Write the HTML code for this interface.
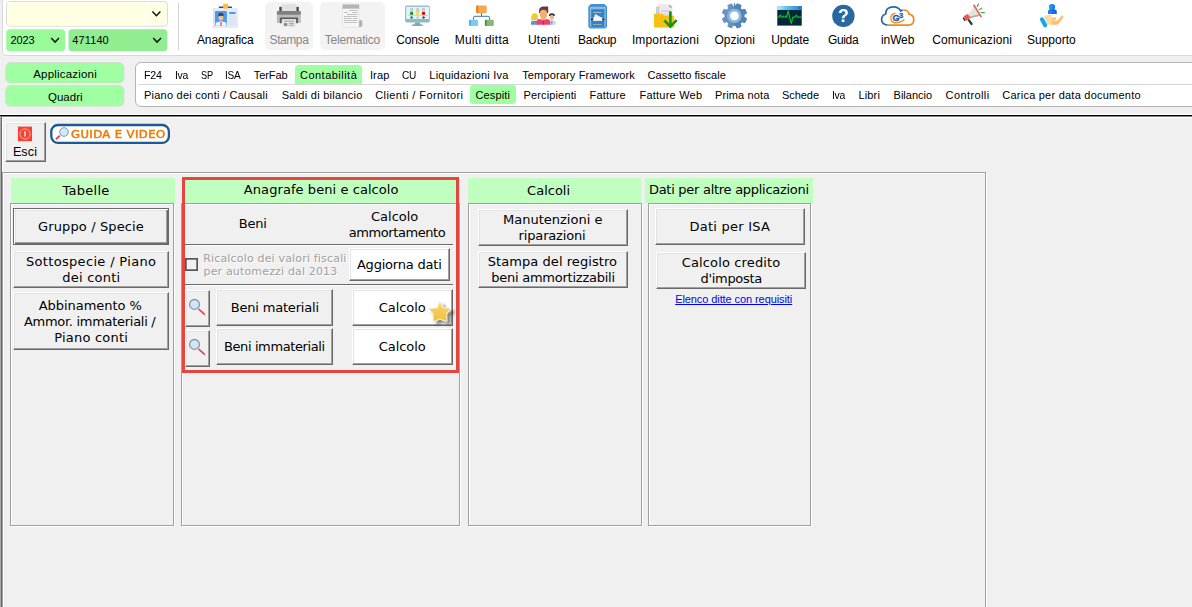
<!DOCTYPE html>
<html><head><meta charset="utf-8"><title>Cespiti</title>
<style>
*{box-sizing:border-box;margin:0;padding:0}
html,body{width:1192px;height:607px;overflow:hidden;background:#f0f0f0}
body{position:relative;font-family:"Liberation Sans",sans-serif;color:#000}
.abs{position:absolute}
#top{position:absolute;left:2px;top:-4px;width:1200px;height:60px;background:#fff;border:1px solid #d9d9d9;border-radius:5px}
.cb{position:absolute;border:1px solid #dcdcdc;border-radius:4px;font-size:11px;line-height:22px;padding-left:5px;white-space:nowrap}
.cb.g{border-color:rgba(255,255,255,.12);line-height:20px;letter-spacing:-0.35px;padding-left:4px}
.chev{position:absolute;width:9px;height:6px}
.tb{position:absolute;top:0;height:50px;font-size:12px;text-align:center;white-space:nowrap}
.tb span{position:absolute;left:0;right:0;top:33px;line-height:15px}
.tb svg{position:absolute;top:4px;left:50%;margin-left:-12px;width:24px;height:24px}
.dis{background:#f3f3f3;border-radius:5px}
.gbtn{position:absolute;left:6px;width:118px;height:21px;background:#a0ffa0;border-radius:5px;font-size:12px;line-height:22px;text-align:center;box-shadow:0 0 1px #d8c0d8}
#menu{position:absolute;left:135px;top:62px;width:1070px;height:45px;background:#fff;border:1px solid #b4b4b4;border-radius:6px}
.mi{position:absolute;font-size:11.5px;line-height:16px;white-space:nowrap}
.hl{position:absolute;background:#a0ffa0}
.v{font-family:"DejaVu Sans","Liberation Sans",sans-serif}
.hdr{position:absolute;top:178px;height:25px;background:#c0ffc0}
.ht{position:absolute;top:179px;font-family:"DejaVu Sans","Liberation Sans",sans-serif;font-size:13px;line-height:24px;white-space:nowrap}
.box{position:absolute;top:203px;height:323px;border:1px solid #a0a0a0;box-shadow:inset 1px 1px 0 #fff,1px 1px 0 #fff}
.btn{position:absolute;background:#f0f0f0;font-family:"DejaVu Sans","Liberation Sans",sans-serif;font-size:13px;line-height:16px;text-align:center;display:flex;align-items:center;justify-content:center;
 border-top:1px solid #fff;border-left:1px solid #fff;border-right:1px solid #696969;border-bottom:1px solid #696969;box-shadow:inset -1px -1px 0 #a0a0a0,inset 1px 1px 0 #e3e3e3}
.btn.w{background:#fff}
.btn.def{border:1px solid #696969;box-shadow:inset 1px 1px 0 #fff,inset -1px -1px 0 #696969,inset -2px -2px 0 #a0a0a0,inset 2px 2px 0 #e3e3e3}
</style></head><body>
<div id="top"></div>
<!-- combos -->
<svg class="abs" style="left:0;top:0;width:180px;height:56px" viewBox="0 0 180 56">
<rect x="6.5" y="1.5" width="161" height="24.7" rx="3.6" fill="#fff" stroke="#dadada" stroke-width="1"/>
<path d="M10 2H146V25.7H10Q7 25.7 7 22.7V5Q7 2 10 2Z" fill="#ffffe1"/>
<path d="M147 2.8H164.3Q166.4 2.8 166.4 4.8V22.6Q166.4 24.6 164.3 24.6H147Z" fill="#ffffe1"/>
<rect x="6.2" y="29.2" width="58.9" height="22.1" rx="3.6" fill="#98fb98"/>
<rect x="68.5" y="29.3" width="98.8" height="21.9" rx="3.6" fill="#90ee90"/>
<path d="M152.4 11.6L156.4 15.7L160.4 11.6" fill="none" stroke="#111" stroke-width="1.5"/>
<path d="M51.2 38L55.1 42.1L59 38" fill="none" stroke="#111" stroke-width="1.5"/>
<path d="M153.2 38L157.1 42.1L161 38" fill="none" stroke="#111" stroke-width="1.5"/>
</svg>
<div class="abs" style="left:178px;top:3px;width:1px;height:47px;background:#d4d4d4"></div>

<!-- toolbar icons -->
<svg class="abs" style="left:0;top:0;width:1192px;height:56px;z-index:2" viewBox="0 0 1192 56">
<!-- Anagrafica -->
<g>
<rect x="213.2" y="7.9" width="24.8" height="20.1" rx="0.8" fill="#e4ebf8"/>
<rect x="213.2" y="7.9" width="1.2" height="20.1" fill="#d3dcee"/>
<rect x="218.7" y="6.5" width="13.4" height="1.5" rx="0.7" fill="#3d4a5c"/>
<rect x="223.2" y="3.7" width="4.8" height="5" rx="0.8" fill="#f7c13c"/>
<rect x="215" y="11" width="11.9" height="14.8" rx="0.8" fill="#4a9af5"/>
<path d="M215.6 25.8 V23.6 Q215.6 22.4 218.5 21.8 L221 21.2 L223.5 21.8 Q226.4 22.4 226.4 23.6 V25.8Z" fill="#f4f6fb"/>
<rect x="220.3" y="22" width="1.4" height="3.8" fill="#e2555a"/>
<ellipse cx="220.9" cy="17.6" rx="2.5" ry="3" fill="#f6c08a"/>
<path d="M218.2 16.6 Q217.8 13 221 12.8 Q224 13 223.6 16.6 Q221.5 14.8 218.2 16.6Z" fill="#394452"/>
<rect x="229" y="12.1" width="6.8" height="1.9" rx="0.9" fill="#4a9af5"/>
<path d="M229 16.2H235.8M229 18.2H235.8M229 20.2H235.8M229 22.2H235.8M229 24.2H235.8" stroke="#d6dcea" stroke-width="0.8"/>
</g>
<!-- Stampa -->
<g>
<rect x="281.9" y="4.2" width="14.2" height="7" fill="#e0e0e0"/>
<rect x="279.3" y="6.8" width="2.4" height="4.5" fill="#4a4a4a"/>
<rect x="296.4" y="6.8" width="2.4" height="4.5" fill="#4a4a4a"/>
<rect x="276.9" y="11" width="23.9" height="12" rx="0.8" fill="#bdbdbd"/>
<rect x="276.9" y="11" width="23.9" height="3.7" rx="0.8" fill="#808080"/>
<path d="M279.8 23.2V17.4H298V23.2H296.2V19.2H281.6V23.2Z" fill="#5a5a5a"/>
<rect x="282.2" y="19.2" width="13.6" height="8.2" fill="#e6e6e6"/>
<rect x="284" y="23.2" width="3.2" height="2.6" fill="#808080"/>
<path d="M284 21.2H294M289 23.4H294M289 25.2H294" stroke="#9a9a9a" stroke-width="0.9"/>
</g>
<!-- Telematico -->
<g>
<path d="M342.5 4.5H359.1V27.4H344Q342.5 27.4 342.5 25.8Z" fill="#f6f6f6" stroke="#dcdcdc" stroke-width="0.6"/>
<rect x="342.5" y="4.5" width="16.6" height="4.2" fill="#b4b4b4"/>
<path d="M359.1 20.3H362.3V25Q362.3 27.2 360 27.2H359.1Z" fill="#b0b0b0"/>
<path d="M349 10.5H357.5M344 12.5H348M352 12.5H357.5M347 14.5H357.5M344 16.5H357.5M344 18.5H351.5M353 18.5H357.5M344 20.5H357.5M344 22.5H357.5" stroke="#bcbcbc" stroke-width="0.9"/>
</g>
<!-- Console -->
<g>
<rect x="405.1" y="5.5" width="24.7" height="16.9" rx="1.6" fill="#8fb8c8"/>
<rect x="406.2" y="6.8" width="22.8" height="12.2" fill="#e0f4fc"/>
<rect x="410.1" y="7.9" width="3" height="4.2" fill="#d0c8c8"/><rect x="416.2" y="7.9" width="3" height="4.2" fill="#d0c8c8"/><rect x="422" y="7.9" width="3" height="4.2" fill="#d0c8c8"/>
<rect x="410.1" y="12.1" width="3" height="2.7" fill="#109010"/><rect x="416.2" y="12.1" width="3" height="2.7" fill="#ffd840"/><rect x="422" y="12.1" width="3" height="2.7" fill="#d00000"/>
<path d="M408 15.4H428" stroke="#a8c4d0" stroke-width="0.6"/>
<path d="M411.6 15.9L413.2 17.4L411.6 18.9L410 17.4Z" fill="#109010"/><path d="M417.7 15.9L419.3 17.4L417.7 18.9L416.1 17.4Z" fill="#f0c840"/><path d="M423.6 15.9L425.2 17.4L423.6 18.9L422 17.4Z" fill="#d01818"/>
<path d="M415.2 22.4H419.8L420.6 24.6H422.7V26H412V24.6H414.4Z" fill="#7aa8b8"/>
</g>
<!-- Multi ditta -->
<g>
<rect x="476.2" y="5.5" width="10.5" height="7.7" rx="1.4" fill="#f4a850"/>
<path d="M477.6 5.5H478.3V13.2H477.6Q476.2 13.2 476.2 11.8V6.9Q476.2 5.5 477.6 5.5Z" fill="#f08010"/>
<path d="M481.5 13.2V16.3M473.4 19.8V17.8Q473.4 16.3 474.9 16.3H488.1Q489.6 16.3 489.6 17.8V19.8" fill="none" stroke="#3c74b0" stroke-width="1"/>
<rect x="469.1" y="19.7" width="8.9" height="6.3" rx="1.2" fill="#80c8f0"/>
<path d="M470.3 19.7H470.9V26H470.3Q469.1 26 469.1 24.8V20.9Q469.1 19.7 470.3 19.7Z" fill="#40b0e8"/>
<rect x="484.9" y="19.7" width="8.9" height="6.3" rx="1.2" fill="#88b878"/>
<path d="M486.1 19.7H486.7V26H486.1Q484.9 26 484.9 24.8V20.9Q484.9 19.7 486.1 19.7Z" fill="#409830"/>
</g>
<!-- Utenti -->
<g>
<path d="M531.1 20.3Q530.6 13 534.7 12.9Q538.8 13 538.3 20.3Z" fill="#f0d800"/>
<ellipse cx="534.7" cy="17.2" rx="2" ry="2.6" fill="#f0b884"/>
<path d="M531 24.7V22.2Q531 20.8 534.7 20.8Q538.2 20.8 538.2 22.2V24.7Z" fill="#6090e0"/>
<path d="M549 16Q548.6 13.2 551.9 13.2Q555.2 13.2 554.8 16Z" fill="#303030"/>
<ellipse cx="551.9" cy="17.3" rx="2.1" ry="2.6" fill="#f0b884"/>
<path d="M548.6 24.7V22Q548.6 20.3 552 20.3Q555.8 20.3 555.8 22V24.7Z" fill="#c8d8f0"/>
<rect x="551.2" y="20.8" width="1.2" height="3.9" fill="#8090f0"/>
<path d="M539 13Q538.6 6.6 543 6.6H548.2V13Z" fill="#6a3848"/>
<ellipse cx="543.5" cy="14.2" rx="3.7" ry="4.4" fill="#f0b070"/>
<path d="M536.6 24.7V21.6Q536.6 19.4 540 18.9L543.5 20.2L547 18.9Q550.3 19.4 550.3 21.6V24.7Z" fill="#f04070"/>
<rect x="543" y="20.6" width="0.9" height="4.1" fill="#604868"/><path d="M541.4 17.4H545.6V19.2L543.5 20.4L541.4 19.2Z" fill="#eeaa68"/>
</g>
<!-- Backup -->
<g>
<path d="M591 3.9H604.3L607 6.6V26.8L605.2 28.4H590.1L588.3 26.8V6.6Z" fill="#4290d2"/>
<rect x="589.9" y="6.8" width="15.8" height="20.4" fill="#8cbce0"/>
<rect x="591.2" y="9.2" width="13.2" height="8.4" fill="#3482c6"/>
<rect x="591.2" y="20.8" width="13.2" height="6.2" fill="#3482c6"/>
<path d="M593 12.4H601.7" stroke="#d4ccbc" stroke-width="0.8"/><path d="M593 24.5H601.7" stroke="#b4b8b0" stroke-width="0.8"/>
<rect x="591" y="18.2" width="2.2" height="2.4" fill="#283858"/><rect x="602.2" y="18.2" width="2.2" height="2.4" fill="#283858"/>
<path d="M595.2 14L602.3 17.9L602 20.8H592.8Z" fill="#f4f4f4"/>
</g>
<!-- Importazioni -->
<g>
<rect x="656" y="6.8" width="1.4" height="8" fill="#a0d8f8"/>
<rect x="657.4" y="6" width="1.7" height="8.8" fill="#f8b0b0"/>
<path d="M659 4.2H669.4L672.4 7.6V16H659Z" fill="#ece8ec"/>
<path d="M669.4 4.2L672.4 7.6H669.4Z" fill="#a0a0a8"/>
<path d="M661 11H669" stroke="#b8b4bc" stroke-width="0.7"/>
<path d="M661.5 14H671" stroke="#d0cce4" stroke-width="0.9"/>
<path d="M654 13.7H661Q662.2 13.7 663 14.6Q663.8 15.5 665 15.5H673.4Q674.2 15.5 674.2 16.3V27.6H654Z" fill="#f8c010"/>
<path d="M670.4 11.3V25.8M664.3 20.4L670.4 26.6L676.6 20.2" fill="none" stroke="#109810" stroke-width="2.6" stroke-linejoin="miter"/>
</g>
<!-- Opzioni -->
<g>
<path d="M743.9 17.2 L746.5 18.7 L744.9 22.5 L742.1 21.7 L740.2 23.6 L741.0 26.4 L737.2 28.0 L735.7 25.4 L733.1 25.4 L731.6 28.0 L727.8 26.4 L728.6 23.6 L726.7 21.7 L723.9 22.5 L722.3 18.7 L724.9 17.2 L724.9 14.6 L722.3 13.1 L723.9 9.3 L726.7 10.1 L728.6 8.2 L727.8 5.4 L731.6 3.8 L733.1 6.4 L735.7 6.4 L737.2 3.8 L741.0 5.4 L740.2 8.2 L742.1 10.1 L744.9 9.3 L746.5 13.1 L743.9 14.6Z" fill="#6890c0" stroke="#6890c0" stroke-width="0.8" stroke-linejoin="round"/>
<path d="M734.4 3.4 L735.7 6.4 L737.2 3.8 L741.0 5.4 L740.2 8.2 L742.1 10.1 L744.9 9.3 L746.5 13.1 L743.9 14.6 L743.9 17.2 L746.5 18.7 L744.9 22.5 L742.1 21.7 L740.2 23.6 L741.0 26.4 L737.2 28.0 L735.7 25.4 L734.4 25.4Z" fill="#5482b4" stroke="#5482b4" stroke-width="0.8" stroke-linejoin="round"/>
<circle cx="734.4" cy="15.9" r="7.2" fill="#8fc0e2"/>
<circle cx="734.4" cy="15.9" r="6.2" fill="none" stroke="#7fb0d6" stroke-width="1"/>
<circle cx="734.4" cy="15.9" r="4.3" fill="#fff"/>
</g>
<!-- Update -->
<defs><linearGradient id="ug" x1="0" x2="1" y1="0" y2="0"><stop offset="0" stop-color="#b8ecfa"/><stop offset="0.35" stop-color="#70c0ec"/><stop offset="1" stop-color="#2080d4"/></linearGradient></defs>
<g>
<rect x="777.1" y="6" width="24.8" height="19.8" rx="0.6" fill="#205888"/>
<rect x="777.1" y="6" width="24.8" height="4" fill="url(#ug)"/>
<rect x="778" y="10" width="23" height="15" fill="#002838"/>
<rect x="798.8" y="7" width="1" height="2" fill="#b03040"/>
<path d="M777.3 17.1H779.2L780.3 14.8L781.4 17.2H782.4L783.2 16L784 17.2H785L785.8 15.8L786.6 17.2L788.2 10.8L789.6 17.4L791.3 23.6L792.8 17.1H795.2L796.3 15L797.4 17.1H802" fill="none" stroke="#00c820" stroke-width="1.1" stroke-linejoin="round"/>
</g>
<!-- Guida -->
<g>
<circle cx="843.4" cy="15.9" r="11.2" fill="#2868a0"/>
<text x="843.4" y="22.3" text-anchor="middle" font-family="Liberation Sans, sans-serif" font-weight="bold" font-size="17.5" fill="#fff">?</text>
</g>
<!-- inWeb -->
<g fill="none" stroke-width="1.7" stroke-linecap="butt">
<path d="M887.6 25.1Q881.6 24.6 881.6 19.6Q881.6 15.2 885.7 14Q885.7 6.9 893.6 6.9Q898.6 6.9 900.6 11Q901.6 10.2 902.8 10.1" stroke="#2868a8"/>
<path d="M903.2 10Q908.4 10 909 14.2Q913.8 15 913.8 19.8Q913.8 25.1 908.6 25.1H887.6" stroke="#f08820"/>
<path d="M895.4 13.2Q890.6 14.4 890.8 18.4Q891.2 22.8 896.6 22.8Q901.4 22.6 904.4 19.4" stroke="#f08820" stroke-width="1.2"/>
</g>
<text x="892.5" y="21" font-family="Liberation Sans, sans-serif" font-weight="bold" font-size="9.2" fill="#245e9c" stroke="#245e9c" stroke-width="0.35">G</text>
<text x="898.9" y="18.4" font-family="Liberation Sans, sans-serif" font-weight="bold" font-size="7.6" fill="#245e9c" stroke="#245e9c" stroke-width="0.3">3</text>
<!-- Comunicazioni -->
<g>
<path d="M968.4 14.2L973.6 6.8L980.5 15.8L970 17.9Z" fill="#e4e4e4"/>
<path d="M969.6 16.6L979.2 14.2L980.5 15.8L970.2 18.2Z" fill="#b0b0b0"/>
<path d="M973.9 5.3L981 16.6" stroke="#f06050" stroke-width="1.7" stroke-linecap="round"/>
<path d="M963.6 18.2L964.9 20.2" stroke="#283848" stroke-width="1.6" stroke-linecap="round"/>
<path d="M968.8 20.2L971.6 24" stroke="#283848" stroke-width="2.2" stroke-linecap="round"/>
<path d="M963.9 16.3L967.8 14.2L970.2 17.9L966.3 20.5Z" fill="#f05848" stroke="#f05848" stroke-width="0.6" stroke-linejoin="round"/>
<path d="M978.4 4L977.2 6.5M981.6 8.2L979.3 9.6M981 12.5H984.4" stroke="#20b040" stroke-width="1.1" stroke-linecap="round"/>
</g>
<!-- Supporto -->
<g>
<circle cx="1052.1" cy="6.9" r="3" fill="#1878f0"/>
<path d="M1052.1 3.9A3 3 0 0 0 1052.1 9.9Z" fill="#18a0e0"/>
<path d="M1048.2 14V11.6Q1048.2 9 1052.5 9Q1056.8 9 1056.8 11.6V14Z" fill="#1868e8"/>
<path d="M1048.2 14V11.6Q1048.2 9 1052.1 9V14Z" fill="#2080f0"/>
<path d="M1044.2 16.4Q1046.4 15 1049 15H1051.8V24.7H1047.6Z" fill="#fdd8a8"/>
<path d="M1051.8 17.4H1056.2V19.8H1053V20.6H1057.6L1061.4 15.8Q1062.4 15 1063.2 15.8Q1063.8 16.6 1063.2 17.6L1059 23.6Q1058.2 24.7 1056.6 24.7H1051.8Z" fill="#fcc070"/>
<path d="M1042 19.4L1045.2 25.2" stroke="#18a8e8" stroke-width="4.2" stroke-linecap="round"/>
</g>
</svg>
<!-- toolbar buttons -->
<div class="abs dis" style="left:265px;top:2px;width:48px;height:48px"></div>
<div class="abs dis" style="left:320px;top:2px;width:65px;height:48px"></div>

<svg class="abs" style="left:0;top:58px;width:130px;height:52px" viewBox="0 58 130 52">
<rect x="5.7" y="62.6" width="118.3" height="20.3" rx="4.6" fill="#a0ffa0" stroke="#dcc8dc" stroke-width="0.5"/>
<rect x="5.7" y="85.6" width="118.3" height="20.6" rx="4.6" fill="#a0ffa0" stroke="#dcc8dc" stroke-width="0.5"/>
</svg>

<div id="menu"></div>
<div class="abs" style="left:138px;top:84px;width:1060px;height:1px;background:#d6d6d6"></div>
<div class="hl" style="left:295px;top:65px;width:67px;height:19px;border-radius:4px 4px 0 0"></div>
<div class="hl" style="left:470px;top:85px;width:46px;height:19px;border-radius:3px"></div>

<!-- work area frame -->
<div class="abs" style="left:0;top:114px;width:1192px;height:1px;background:#fff"></div>
<div class="abs" style="left:0;top:115px;width:1192px;height:1px;background:#000"></div>
<div class="abs" style="left:0;top:116px;width:1px;height:500px;background:#a8a8a8"></div>
<div class="abs" style="left:1px;top:116px;width:1191px;height:1px;background:#808080"></div>
<div class="abs" style="left:1px;top:116px;width:1px;height:500px;background:#696969"></div>
<div class="abs" style="left:2px;top:117px;width:1190px;height:1px;background:#fff"></div>
<div class="abs" style="left:2px;top:117px;width:1px;height:500px;background:#fff"></div>

<!-- Esci -->
<div class="btn" style="left:5px;top:122px;width:41px;height:40px"></div>
<svg class="abs" style="left:17px;top:126px;width:16px;height:16px" viewBox="17 126 16 16"><rect x="17.9" y="126.6" width="14.1" height="14.6" fill="#f44336"/><circle cx="25" cy="134" r="5.1" fill="none" stroke="#fbd0cc" stroke-width="0.7"/><path d="M25 131.2V136.4" stroke="#fde4e0" stroke-width="1.5"/></svg>

<!-- guida e video -->
<div class="abs" style="left:50px;top:124px;width:120px;height:20px;background:#fff"></div>
<svg class="abs" style="left:50px;top:123px;width:120px;height:22px" viewBox="50 123 120 22"><rect x="51.3" y="125" width="117.6" height="17.9" rx="6.6" fill="#fff" stroke="#1c5a96" stroke-width="2.3"/><path d="M59.3 136.2L56.5 138.7" stroke="#f04050" stroke-width="2" stroke-linecap="round"/><circle cx="64" cy="132" r="4.3" fill="#d4e8f8" stroke="#7c98ae" stroke-width="1"/></svg>
<div class="abs v" style="left:70.5px;top:126px;font-size:10.3px;line-height:16px;color:#ee7c04;-webkit-text-stroke:0.5px #ee7c04;white-space:nowrap;letter-spacing:0.35px;transform:scaleX(1.13);transform-origin:0 0">GUIDA E VIDEO</div>

<!-- container -->
<div class="abs" style="left:2px;top:172px;width:984px;height:500px;border:1px solid #a0a0a0;box-shadow:inset 1px 1px 0 #fff,1px 1px 0 #fff"></div>

<div class="hdr" style="left:11px;width:164px"></div>
<div class="hdr" style="left:182px;width:278px"></div>
<div class="hdr" style="left:468px;width:173px"></div>
<div class="hdr" style="left:645px;width:168px"></div>

<div class="box" style="left:10px;width:164px"></div>
<div class="box" style="left:181px;width:279px"></div>
<div class="box" style="left:468px;width:174px"></div>
<div class="box" style="left:648px;width:163px"></div>

<!-- Tabelle buttons -->
<div class="btn def" style="left:13px;top:208px;width:156px;height:37px"></div>
<div class="btn" style="left:13px;top:251px;width:156px;height:37px"></div>
<div class="btn" style="left:13px;top:292px;width:156px;height:58px"></div>

<!-- Anagrafe -->
<div class="abs" style="left:185px;top:244px;width:268px;height:1px;background:#696969;box-shadow:0 1px 0 #fff"></div>
<svg class="abs" style="left:185px;top:258px;width:13px;height:13px" viewBox="0 0 13 13"><rect x="0.85" y="0.85" width="11.3" height="11.3" fill="none" stroke="#555" stroke-width="1.7"/></svg>
<div class="btn w" style="left:349px;top:248px;width:101px;height:33px"></div>
<div class="abs" style="left:185px;top:284px;width:268px;height:1px;background:#696969;box-shadow:0 1px 0 #fff"></div>
<div class="btn" style="left:185px;top:290px;width:25px;height:37px"></div>
<div class="btn" style="left:185px;top:330px;width:25px;height:37px"></div>
<svg class="abs" style="left:187px;top:296px;width:21px;height:21px" viewBox="187 296 21 21"><path d="M199 309.3L204.3 314.1" stroke="#f04050" stroke-width="1.7" stroke-linecap="round"/><circle cx="194.5" cy="304.4" r="4.9" fill="#d2e6f8" stroke="#8496ac" stroke-width="1.3"/></svg>
<svg class="abs" style="left:187px;top:336px;width:21px;height:21px" viewBox="187 296 21 21"><path d="M199 309.3L204.3 314.1" stroke="#f04050" stroke-width="1.7" stroke-linecap="round"/><circle cx="194.5" cy="304.4" r="4.9" fill="#d2e6f8" stroke="#8496ac" stroke-width="1.3"/></svg>
<div class="btn" style="left:216px;top:289px;width:117px;height:37px"></div>
<div class="btn" style="left:216px;top:328px;width:117px;height:37px"></div>
<div class="btn w" style="left:352px;top:289px;width:101px;height:37px"></div>
<div class="btn w" style="left:352px;top:328px;width:101px;height:37px"></div>

<!-- Calcoli -->
<div class="btn" style="left:478px;top:209px;width:150px;height:37px"></div>
<div class="btn" style="left:478px;top:251px;width:150px;height:37px"></div>

<!-- Dati -->
<div class="btn" style="left:655px;top:208px;width:150px;height:37px"></div>
<div class="btn" style="left:656px;top:252px;width:150px;height:37px"></div>
<!-- panel text -->
<div class="abs" style="left:62.50px;top:183px;font-family:'DejaVu Sans','Liberation Sans',sans-serif;font-size:13px;line-height:16px;color:#000;white-space:nowrap;letter-spacing:0.267px;">Tabelle</div>
<div class="abs" style="left:243.85px;top:182px;font-family:'DejaVu Sans','Liberation Sans',sans-serif;font-size:13px;line-height:16px;color:#000;white-space:nowrap;letter-spacing:0.068px;">Anagrafe beni e calcolo</div>
<div class="abs" style="left:527.10px;top:183px;font-family:'DejaVu Sans','Liberation Sans',sans-serif;font-size:13px;line-height:16px;color:#000;white-space:nowrap;letter-spacing:-0.000px;">Calcoli</div>
<div class="abs" style="left:648.95px;top:182px;font-family:'DejaVu Sans','Liberation Sans',sans-serif;font-size:13px;line-height:16px;color:#000;white-space:nowrap;letter-spacing:-0.281px;">Dati per altre applicazioni</div>
<div class="abs" style="left:38.00px;top:219px;font-family:'DejaVu Sans','Liberation Sans',sans-serif;font-size:13px;line-height:16px;color:#000;white-space:nowrap;letter-spacing:0.129px;">Gruppo / Specie</div>
<div class="abs" style="left:25.95px;top:254px;font-family:'DejaVu Sans','Liberation Sans',sans-serif;font-size:13px;line-height:16px;color:#000;white-space:nowrap;letter-spacing:0.328px;">Sottospecie / Piano</div>
<div class="abs" style="left:62.35px;top:270px;font-family:'DejaVu Sans','Liberation Sans',sans-serif;font-size:13px;line-height:16px;color:#000;white-space:nowrap;letter-spacing:0.213px;">dei conti</div>
<div class="abs" style="left:38.75px;top:298px;font-family:'DejaVu Sans','Liberation Sans',sans-serif;font-size:13px;line-height:16px;color:#000;white-space:nowrap;letter-spacing:-0.042px;">Abbinamento %</div>
<div class="abs" style="left:23.95px;top:314px;font-family:'DejaVu Sans','Liberation Sans',sans-serif;font-size:13px;line-height:16px;color:#000;white-space:nowrap;letter-spacing:-0.289px;">Ammor. immateriali /</div>
<div class="abs" style="left:54.15px;top:330px;font-family:'DejaVu Sans','Liberation Sans',sans-serif;font-size:13px;line-height:16px;color:#000;white-space:nowrap;letter-spacing:0.230px;">Piano conti</div>
<div class="abs" style="left:238.65px;top:216px;font-family:'DejaVu Sans','Liberation Sans',sans-serif;font-size:13px;line-height:16px;color:#000;white-space:nowrap;letter-spacing:-0.167px;">Beni</div>
<div class="abs" style="left:371.00px;top:209px;font-family:'DejaVu Sans','Liberation Sans',sans-serif;font-size:13px;line-height:16px;color:#000;white-space:nowrap;letter-spacing:-0.000px;">Calcolo</div>
<div class="abs" style="left:348.65px;top:225px;font-family:'DejaVu Sans','Liberation Sans',sans-serif;font-size:13px;line-height:16px;color:#000;white-space:nowrap;letter-spacing:-0.409px;">ammortamento</div>
<div class="abs" style="left:356.95px;top:257px;font-family:'DejaVu Sans','Liberation Sans',sans-serif;font-size:13px;line-height:16px;color:#000;white-space:nowrap;letter-spacing:-0.208px;">Aggiorna dati</div>
<div class="abs" style="left:230.70px;top:300px;font-family:'DejaVu Sans','Liberation Sans',sans-serif;font-size:13px;line-height:16px;color:#000;white-space:nowrap;letter-spacing:-0.185px;">Beni materiali</div>
<div class="abs" style="left:378.75px;top:300px;font-family:'DejaVu Sans','Liberation Sans',sans-serif;font-size:13px;line-height:16px;color:#000;white-space:nowrap;letter-spacing:-0.050px;">Calcolo</div>
<div class="abs" style="left:224.00px;top:339px;font-family:'DejaVu Sans','Liberation Sans',sans-serif;font-size:13px;line-height:16px;color:#000;white-space:nowrap;letter-spacing:-0.400px;">Beni immateriali</div>
<div class="abs" style="left:378.75px;top:339px;font-family:'DejaVu Sans','Liberation Sans',sans-serif;font-size:13px;line-height:16px;color:#000;white-space:nowrap;letter-spacing:-0.050px;">Calcolo</div>
<div class="abs" style="left:502.95px;top:212px;font-family:'DejaVu Sans','Liberation Sans',sans-serif;font-size:13px;line-height:16px;color:#000;white-space:nowrap;letter-spacing:0.008px;">Manutenzioni e</div>
<div class="abs" style="left:518.60px;top:228px;font-family:'DejaVu Sans','Liberation Sans',sans-serif;font-size:13px;line-height:16px;color:#000;white-space:nowrap;letter-spacing:-0.160px;">riparazioni</div>
<div class="abs" style="left:487.75px;top:254px;font-family:'DejaVu Sans','Liberation Sans',sans-serif;font-size:13px;line-height:16px;color:#000;white-space:nowrap;letter-spacing:0.061px;">Stampa del registro</div>
<div class="abs" style="left:491.15px;top:270px;font-family:'DejaVu Sans','Liberation Sans',sans-serif;font-size:13px;line-height:16px;color:#000;white-space:nowrap;letter-spacing:-0.239px;">beni ammortizzabili</div>
<div class="abs" style="left:689.50px;top:219px;font-family:'DejaVu Sans','Liberation Sans',sans-serif;font-size:13px;line-height:16px;color:#000;white-space:nowrap;letter-spacing:0.236px;">Dati per ISA</div>
<div class="abs" style="left:681.75px;top:255px;font-family:'DejaVu Sans','Liberation Sans',sans-serif;font-size:13px;line-height:16px;color:#000;white-space:nowrap;letter-spacing:0.136px;">Calcolo credito</div>
<div class="abs" style="left:700.55px;top:271px;font-family:'DejaVu Sans','Liberation Sans',sans-serif;font-size:13px;line-height:16px;color:#000;white-space:nowrap;letter-spacing:-0.313px;">d'imposta</div>
<div class="abs" style="left:203.15px;top:251px;font-family:'DejaVu Sans','Liberation Sans',sans-serif;font-size:11px;line-height:16px;color:#a0a0a0;white-space:nowrap;letter-spacing:0.174px;text-shadow:1px 1px 0 #fff">Ricalcolo dei valori fiscali</div>
<div class="abs" style="left:203.50px;top:264px;font-family:'DejaVu Sans','Liberation Sans',sans-serif;font-size:11px;line-height:16px;color:#a0a0a0;white-space:nowrap;letter-spacing:0.162px;text-shadow:1px 1px 0 #fff">per automezzi dal 2013</div>
<div class="abs" style="left:675.20px;top:291px;font-family:'Liberation Sans',sans-serif;font-size:11px;line-height:16px;color:#0000ff;white-space:nowrap;letter-spacing:-0.088px;text-decoration:underline;text-underline-offset:1px">Elenco ditte con requisiti</div>
<div class="abs" style="left:10.50px;top:32px;font-family:'Liberation Sans',sans-serif;font-size:11px;line-height:16px;color:#000;white-space:nowrap;letter-spacing:-0.133px;">2023</div>
<div class="abs" style="left:72.25px;top:32px;font-family:'Liberation Sans',sans-serif;font-size:11px;line-height:16px;color:#000;white-space:nowrap;letter-spacing:0.120px;">471140</div>
<div class="abs" style="left:196.95px;top:32px;font-family:'Liberation Sans',sans-serif;font-size:12px;line-height:16px;color:#000;white-space:nowrap;letter-spacing:-0.078px;">Anagrafica</div>
<div class="abs" style="left:269.55px;top:32px;font-family:'Liberation Sans',sans-serif;font-size:12px;line-height:16px;color:#868686;white-space:nowrap;letter-spacing:-0.420px;">Stampa</div>
<div class="abs" style="left:324.80px;top:32px;font-family:'Liberation Sans',sans-serif;font-size:12px;line-height:16px;color:#868686;white-space:nowrap;letter-spacing:-0.222px;">Telematico</div>
<div class="abs" style="left:396.20px;top:32px;font-family:'Liberation Sans',sans-serif;font-size:12px;line-height:16px;color:#000;white-space:nowrap;letter-spacing:-0.133px;">Console</div>
<div class="abs" style="left:454.65px;top:32px;font-family:'Liberation Sans',sans-serif;font-size:12px;line-height:16px;color:#000;white-space:nowrap;letter-spacing:0.270px;">Multi ditta</div>
<div class="abs" style="left:528.00px;top:32px;font-family:'Liberation Sans',sans-serif;font-size:12px;line-height:16px;color:#000;white-space:nowrap;letter-spacing:0.120px;">Utenti</div>
<div class="abs" style="left:578.10px;top:32px;font-family:'Liberation Sans',sans-serif;font-size:12px;line-height:16px;color:#000;white-space:nowrap;letter-spacing:-0.320px;">Backup</div>
<div class="abs" style="left:631.90px;top:32px;font-family:'Liberation Sans',sans-serif;font-size:12px;line-height:16px;color:#000;white-space:nowrap;letter-spacing:0.145px;">Importazioni</div>
<div class="abs" style="left:714.60px;top:32px;font-family:'Liberation Sans',sans-serif;font-size:12px;line-height:16px;color:#000;white-space:nowrap;letter-spacing:-0.067px;">Opzioni</div>
<div class="abs" style="left:771.20px;top:32px;font-family:'Liberation Sans',sans-serif;font-size:12px;line-height:16px;color:#000;white-space:nowrap;letter-spacing:-0.160px;">Update</div>
<div class="abs" style="left:828.00px;top:32px;font-family:'Liberation Sans',sans-serif;font-size:12px;line-height:16px;color:#000;white-space:nowrap;letter-spacing:-0.350px;">Guida</div>
<div class="abs" style="left:881.05px;top:32px;font-family:'Liberation Sans',sans-serif;font-size:12px;line-height:16px;color:#000;white-space:nowrap;letter-spacing:-0.125px;">inWeb</div>
<div class="abs" style="left:932.25px;top:32px;font-family:'Liberation Sans',sans-serif;font-size:12px;line-height:16px;color:#000;white-space:nowrap;letter-spacing:0.075px;">Comunicazioni</div>
<div class="abs" style="left:1027.05px;top:32px;font-family:'Liberation Sans',sans-serif;font-size:12px;line-height:16px;color:#000;white-space:nowrap;letter-spacing:-0.014px;">Supporto</div>
<div class="abs" style="left:33.25px;top:66px;font-family:'Liberation Sans',sans-serif;font-size:11.5px;line-height:16px;color:#000;white-space:nowrap;letter-spacing:0.191px;">Applicazioni</div>
<div class="abs" style="left:47.92px;top:89px;font-family:'Liberation Sans',sans-serif;font-size:11.5px;line-height:16px;color:#000;white-space:nowrap;letter-spacing:0.050px;">Quadri</div>
<div class="abs" style="left:144.15px;top:67px;font-family:'Liberation Sans',sans-serif;font-size:11px;line-height:16px;color:#000;white-space:nowrap;letter-spacing:-0.300px;transform:scaleX(0.9728);transform-origin:0 0;">F24</div>
<div class="abs" style="left:175.15px;top:67px;font-family:'Liberation Sans',sans-serif;font-size:11px;line-height:16px;color:#000;white-space:nowrap;letter-spacing:-0.300px;transform:scaleX(0.9514);transform-origin:0 0;">Iva</div>
<div class="abs" style="left:201.45px;top:67px;font-family:'Liberation Sans',sans-serif;font-size:11px;line-height:16px;color:#000;white-space:nowrap;letter-spacing:-0.300px;transform:scaleX(0.8367);transform-origin:0 0;">SP</div>
<div class="abs" style="left:225.30px;top:67px;font-family:'Liberation Sans',sans-serif;font-size:11px;line-height:16px;color:#000;white-space:nowrap;letter-spacing:-0.300px;transform:scaleX(0.9195);transform-origin:0 0;">ISA</div>
<div class="abs" style="left:253.70px;top:67px;font-family:'Liberation Sans',sans-serif;font-size:11px;line-height:16px;color:#000;white-space:nowrap;letter-spacing:-0.040px;">TerFab</div>
<div class="abs" style="left:300.00px;top:67px;font-family:'Liberation Sans',sans-serif;font-size:11px;line-height:16px;color:#000;white-space:nowrap;letter-spacing:0.480px;">Contabilità</div>
<div class="abs" style="left:369.90px;top:67px;font-family:'Liberation Sans',sans-serif;font-size:11px;line-height:16px;color:#000;white-space:nowrap;letter-spacing:0.133px;">Irap</div>
<div class="abs" style="left:402.30px;top:67px;font-family:'Liberation Sans',sans-serif;font-size:11px;line-height:16px;color:#000;white-space:nowrap;letter-spacing:-0.300px;transform:scaleX(0.9172);transform-origin:0 0;">CU</div>
<div class="abs" style="left:429.35px;top:67px;font-family:'Liberation Sans',sans-serif;font-size:11px;line-height:16px;color:#000;white-space:nowrap;letter-spacing:0.207px;">Liquidazioni Iva</div>
<div class="abs" style="left:522.20px;top:67px;font-family:'Liberation Sans',sans-serif;font-size:11px;line-height:16px;color:#000;white-space:nowrap;letter-spacing:0.144px;">Temporary Framework</div>
<div class="abs" style="left:647.60px;top:67px;font-family:'Liberation Sans',sans-serif;font-size:11px;line-height:16px;color:#000;white-space:nowrap;letter-spacing:0.040px;">Cassetto fiscale</div>
<div class="abs" style="left:144.00px;top:87px;font-family:'Liberation Sans',sans-serif;font-size:11px;line-height:16px;color:#000;white-space:nowrap;letter-spacing:0.233px;">Piano dei conti / Causali</div>
<div class="abs" style="left:281.65px;top:87px;font-family:'Liberation Sans',sans-serif;font-size:11px;line-height:16px;color:#000;white-space:nowrap;letter-spacing:0.269px;">Saldi di bilancio</div>
<div class="abs" style="left:375.20px;top:87px;font-family:'Liberation Sans',sans-serif;font-size:11px;line-height:16px;color:#000;white-space:nowrap;letter-spacing:0.433px;">Clienti / Fornitori</div>
<div class="abs" style="left:475.40px;top:87px;font-family:'Liberation Sans',sans-serif;font-size:11px;line-height:16px;color:#000;white-space:nowrap;letter-spacing:0.167px;">Cespiti</div>
<div class="abs" style="left:523.45px;top:87px;font-family:'Liberation Sans',sans-serif;font-size:11px;line-height:16px;color:#000;white-space:nowrap;letter-spacing:0.150px;">Percipienti</div>
<div class="abs" style="left:589.55px;top:87px;font-family:'Liberation Sans',sans-serif;font-size:11px;line-height:16px;color:#000;white-space:nowrap;letter-spacing:0.217px;">Fatture</div>
<div class="abs" style="left:639.50px;top:87px;font-family:'Liberation Sans',sans-serif;font-size:11px;line-height:16px;color:#000;white-space:nowrap;letter-spacing:0.220px;">Fatture Web</div>
<div class="abs" style="left:714.95px;top:87px;font-family:'Liberation Sans',sans-serif;font-size:11px;line-height:16px;color:#000;white-space:nowrap;letter-spacing:0.144px;">Prima nota</div>
<div class="abs" style="left:782.10px;top:87px;font-family:'Liberation Sans',sans-serif;font-size:11px;line-height:16px;color:#000;white-space:nowrap;letter-spacing:-0.080px;">Schede</div>
<div class="abs" style="left:832.10px;top:87px;font-family:'Liberation Sans',sans-serif;font-size:11px;line-height:16px;color:#000;white-space:nowrap;letter-spacing:-0.300px;transform:scaleX(0.9444);transform-origin:0 0;">Iva</div>
<div class="abs" style="left:858.55px;top:87px;font-family:'Liberation Sans',sans-serif;font-size:11px;line-height:16px;color:#000;white-space:nowrap;letter-spacing:0.125px;">Libri</div>
<div class="abs" style="left:893.55px;top:87px;font-family:'Liberation Sans',sans-serif;font-size:11px;line-height:16px;color:#000;white-space:nowrap;letter-spacing:0.014px;">Bilancio</div>
<div class="abs" style="left:945.60px;top:87px;font-family:'Liberation Sans',sans-serif;font-size:11px;line-height:16px;color:#000;white-space:nowrap;letter-spacing:0.400px;">Controlli</div>
<div class="abs" style="left:1002.30px;top:87px;font-family:'Liberation Sans',sans-serif;font-size:11px;line-height:16px;color:#000;white-space:nowrap;letter-spacing:0.233px;">Carica per data documento</div>
<div class="abs" style="left:12.90px;top:144px;font-family:'Liberation Sans',sans-serif;font-size:12.5px;line-height:16px;color:#000;white-space:nowrap;letter-spacing:0.133px;">Esci</div>
<!-- star + red frame -->
<svg class="abs" style="left:424px;top:298px;width:36px;height:32px;overflow:visible" viewBox="424 298 36 32">
<defs><filter id="sh" x="-50%" y="-50%" width="200%" height="200%"><feGaussianBlur stdDeviation="1.5"/></filter>
<linearGradient id="sg" x1="0" y1="0" x2="0" y2="1"><stop offset="0" stop-color="#f8d668"/><stop offset="1" stop-color="#f0c23e"/></linearGradient></defs>
<path d="M439.9 302.8L442.8 308.4L449.9 309L446 313.6L446.2 320.8L439.9 318.4L433.8 320.8L433.8 313.6L429.9 309.2L437.3 308.4Z" transform="translate(3.6 3)" fill="#202020" stroke="#202020" stroke-width="2" opacity="0.55" filter="url(#sh)"/>
<path d="M439.9 302.8L442.8 308.4L449.9 309L446 313.6L446.2 320.8L439.9 318.4L433.8 320.8L433.8 313.6L429.9 309.2L437.3 308.4Z" fill="#f6f4ee" stroke="#f6f4ee" stroke-width="2.6" stroke-linejoin="round"/>
<path d="M439.9 302.8L442.8 308.4L449.9 309L446 313.6L446.2 320.8L439.9 318.4L433.8 320.8L433.8 313.6L429.9 309.2L437.3 308.4Z" fill="url(#sg)" stroke="url(#sg)" stroke-width="0.5" stroke-linejoin="round"/>
</svg>
<div class="abs" style="left:182px;top:177px;width:277px;height:196px;border:3px solid #e8443e"></div>

</body></html>
